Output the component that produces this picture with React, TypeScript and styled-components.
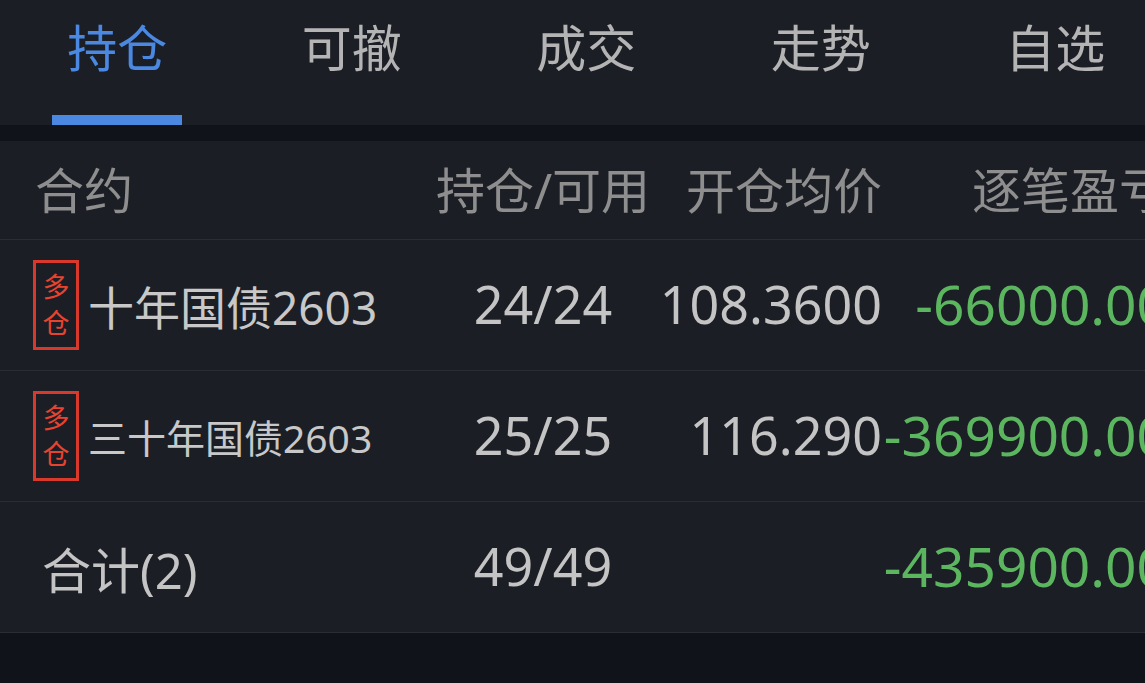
import styled, { createGlobalStyle } from 'styled-components';

const GlobalStyle = createGlobalStyle`
    html, body {
        margin: 0;
        padding: 0;
        background: #10131a;
        font-family: "Noto Sans", "Noto Sans CJK SC", sans-serif;
    }
    #root {
        width: 1145px;
        height: 683px;
        overflow: hidden;
    }
`;

const Page = styled.div`
    width: 1145px;
    height: 683px;
    overflow: hidden;
    display: flex;
    flex-direction: column;
    gap: 16px;
    background: #10131a;
`;

const TabBar = styled.div`
    height: 125px;
    background: #1b1e25;
    display: flex;
    flex: none;
`;

const Tab = styled.div<{ $active?: boolean }>`
    flex: none;
    width: 234.5px;
    display: flex;
    flex-direction: column;
    align-items: center;
    justify-content: space-between;

    .label {
        margin-top: 21px;
        font-size: 50px;
        line-height: 54px;
        color: ${(p) => (p.$active ? '#4a88e2' : '#b4b4b4')};
    }

    .bar {
        width: 130px;
        height: 10px;
        background: ${(p) => (p.$active ? '#4a88e2' : 'transparent')};
    }
`;

const Table = styled.div`
    background: #1b1e25;
    flex: none;
`;

const Row = styled.div<{ $h: number }>`
    height: ${(p) => p.$h}px;
    display: grid;
    grid-template-columns: 430px 226px 226px 286px;
    align-items: center;
    border-bottom: 1px solid #2a2d35;
    white-space: nowrap;
`;

const HeadCell = styled.div<{ $align: 'left' | 'center' | 'right' }>`
    font-size: 49px;
    color: #8e8e8e;
    text-align: ${(p) => p.$align};
    padding-left: ${(p) => (p.$align === 'left' ? '35px' : '0')};
    margin-top: -6px;
`;

const NameCell = styled.div`
    display: flex;
    align-items: center;
    gap: 9px;
    padding-left: 33px;
`;

const Badge = styled.div`
    width: 40px;
    height: 84px;
    border: 3px solid #d9392b;
    display: flex;
    flex-direction: column;
    align-items: center;
    justify-content: center;
    font-size: 27px;
    line-height: 36px;
    color: #e8432f;
`;

const Name = styled.span<{ $size: number }>`
    font-size: ${(p) => p.$size}px;
    color: #c8c8c8;
`;

const Num = styled.div<{ $align: 'center' | 'right'; $green?: boolean }>`
    font-size: ${(p) => (p.$green ? 55 : 52)}px;
    text-align: ${(p) => p.$align};
    color: ${(p) => (p.$green ? '#5cb660' : '#c4c4c4')};
    margin-top: -4px;
`;

const TotalLabel = styled.div`
    padding-left: 42px;
    font-size: 49px;
    color: #c4c4c4;
`;

const tabs = ['持仓', '可撤', '成交', '走势', '自选'];

const positions = [
    { name: '十年国债2603', size: 46, qty: '24/24', price: '108.3600', pnl: '-66000.00' },
    { name: '三十年国债2603', size: 39, qty: '25/25', price: '116.290', pnl: '-369900.00' },
];

const App = () => {
    return (
        <Page>
            <GlobalStyle />
            <TabBar>
                {tabs.map((t, i) => (
                    <Tab key={t} $active={i === 0}>
                        <span className='label'>{t}</span>
                        <span className='bar'></span>
                    </Tab>
                ))}
            </TabBar>
            <Table>
                <Row $h={98}>
                    <HeadCell $align='left'>合约</HeadCell>
                    <HeadCell $align='center'>持仓/可用</HeadCell>
                    <HeadCell $align='right'>开仓均价</HeadCell>
                    <HeadCell $align='right'>逐笔盈亏</HeadCell>
                </Row>
                {positions.map((p) => (
                    <Row key={p.name} $h={130}>
                        <NameCell>
                            <Badge>
                                <span>多</span>
                                <span>仓</span>
                            </Badge>
                            <Name $size={p.size}>{p.name}</Name>
                        </NameCell>
                        <Num $align='center'>{p.qty}</Num>
                        <Num $align='right'>{p.price}</Num>
                        <Num $align='right' $green>{p.pnl}</Num>
                    </Row>
                ))}
                <Row $h={130}>
                    <TotalLabel>合计(2)</TotalLabel>
                    <Num $align='center'>49/49</Num>
                    <Num $align='right'></Num>
                    <Num $align='right' $green>-435900.00</Num>
                </Row>
            </Table>
        </Page>
    );
};

export default App;
